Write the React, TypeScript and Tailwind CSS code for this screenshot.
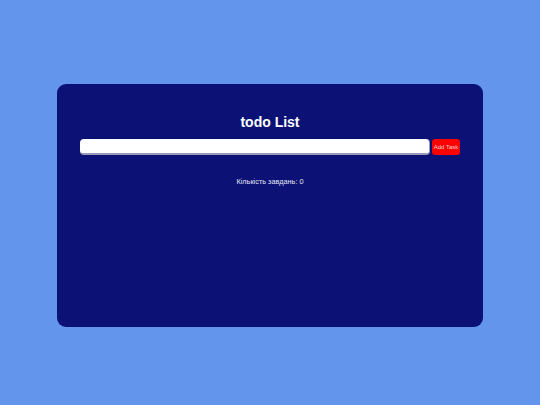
export default function App() {
  return (
    <div className="min-h-screen w-full bg-[#6495ed] pt-[84px] px-[57px]" style={{ fontFamily: '"Liberation Sans", Arial, sans-serif' }}>
      <div className="h-[243px] rounded-[9px] bg-[#0b1175] px-[23px] pt-[30px] flex flex-col items-center">
        <h1 className="text-[14px] leading-[17px] font-bold text-white">todo List</h1>
        <div className="mt-[8px] w-full flex items-center gap-[2px]">
          <input
            className="flex-1 h-[16px] rounded-[4px] bg-white border-b-2 border-r border-[#9a9ab8] outline-none"
            type="text"
          />
          <button className="w-[28px] h-[16px] rounded-[3px] bg-[#ff0000] text-[#ffd0d0] text-[6px] leading-none whitespace-nowrap">
            Add Task
          </button>
        </div>
        <p className="mt-[22px] text-[7.3px] leading-[10px] text-[#e4e4f2]">Кількість завдань: 0</p>
      </div>
    </div>
  );
}
